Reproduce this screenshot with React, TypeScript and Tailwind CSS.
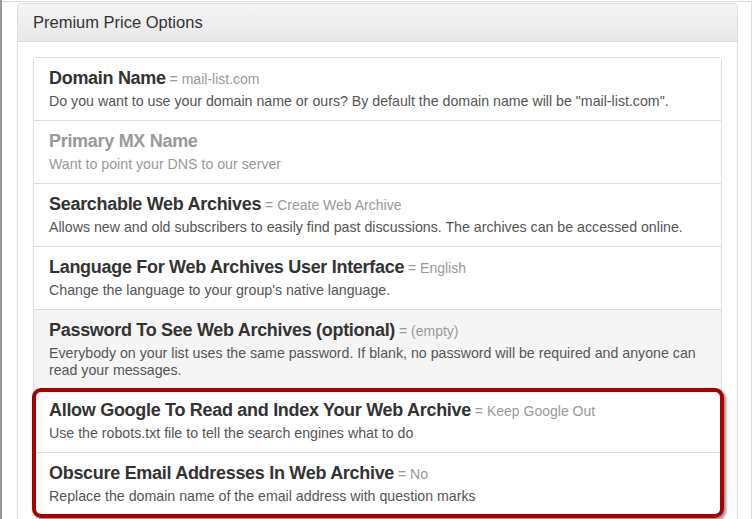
const items: {
  title: string;
  value?: string;
  desc: string;
  muted?: boolean;
  shaded?: boolean;
}[] = [
  {
    title: "Domain Name",
    value: "mail-list.com",
    desc: 'Do you want to use your domain name or ours? By default the domain name will be "mail-list.com".',
  },
  {
    title: "Primary MX Name",
    desc: "Want to point your DNS to our server",
    muted: true,
  },
  {
    title: "Searchable Web Archives",
    value: "Create Web Archive",
    desc: "Allows new and old subscribers to easily find past discussions. The archives can be accessed online.",
  },
  {
    title: "Language For Web Archives User Interface",
    value: "English",
    desc: "Change the language to your group's native language.",
  },
  {
    title: "Password To See Web Archives (optional)",
    value: "(empty)",
    desc: "Everybody on your list uses the same password. If blank, no password will be required and anyone can read your messages.",
    shaded: true,
  },
];

const highlighted = [
  {
    title: "Allow Google To Read and Index Your Web Archive",
    value: "Keep Google Out",
    desc: "Use the robots.txt file to tell the search engines what to do",
  },
  {
    title: "Obscure Email Addresses In Web Archive",
    value: "No",
    desc: "Replace the domain name of the email address with question marks",
  },
];

function Item({
  title,
  value,
  desc,
  muted,
  shaded,
  last,
}: {
  title: string;
  value?: string;
  desc: string;
  muted?: boolean;
  shaded?: boolean;
  last?: boolean;
}) {
  return (
    <div
      className={`px-[15px] pt-[10px] pb-[10px] ${last ? "" : "border-b border-[#dddddd]"} ${
        shaded ? "bg-[#f5f5f5]" : "bg-white"
      }`}
    >
      <div className="mb-[5px] h-[20px] leading-[20px] whitespace-nowrap">
        <span
          className={`text-[18px] font-bold tracking-[-0.3px] ${muted ? "text-[#999999]" : "text-[#333333]"}`}
        >
          {title}
        </span>
        {value && (
          <span className="text-[14px] text-[#999999]"> = {value}</span>
        )}
      </div>
      <p
        className={`text-[14.2px] leading-[17px] ${muted ? "text-[#999999]" : "text-[#555555]"}`}
      >
        {desc}
      </p>
    </div>
  );
}

export default function App() {
  return (
    <div
      className="relative h-[519px] w-[753px] overflow-hidden bg-white"
      style={{ fontFamily: '"Liberation Sans", Arial, sans-serif' }}
    >
      <div className="absolute left-0 top-0 h-full w-[2px] bg-[#9a9a9a]" />
      <div className="absolute left-[2px] top-[1px] h-px w-[750px] bg-[#dcdcdc]" />
      <div className="absolute right-[1px] top-[1px] h-full w-px bg-[#dcdcdc]" />

      <div className="pl-[17px] pt-[3px]">
        <div className="w-[721px] rounded-[4px] border border-[#dddddd] bg-white">
          <div className="rounded-t-[4px] border-b border-[#dddddd] bg-gradient-to-b from-[#f5f5f5] to-[#e8e8e8] px-[15px] py-[10px]">
            <h3 className="text-[16.5px] leading-[17px] text-[#333333]">
              Premium Price Options
            </h3>
          </div>
          <div className="p-[15px]">
            <div className="rounded-[4px] border border-[#dddddd]">
              {items.map((it) => (
                <Item key={it.title} {...it} />
              ))}
              <div className="relative">
                {highlighted.map((it, i) => (
                  <Item key={it.title} {...it} last={i === highlighted.length - 1} />
                ))}
                <div className="pointer-events-none absolute -bottom-[3px] -left-[2px] -right-[3px] -top-[2px] rounded-[9px] border-[4px] border-[#a80000] shadow-[2px_2px_3px_rgba(0,0,0,0.45)]" />
              </div>
            </div>
          </div>
        </div>
      </div>
    </div>
  );
}
